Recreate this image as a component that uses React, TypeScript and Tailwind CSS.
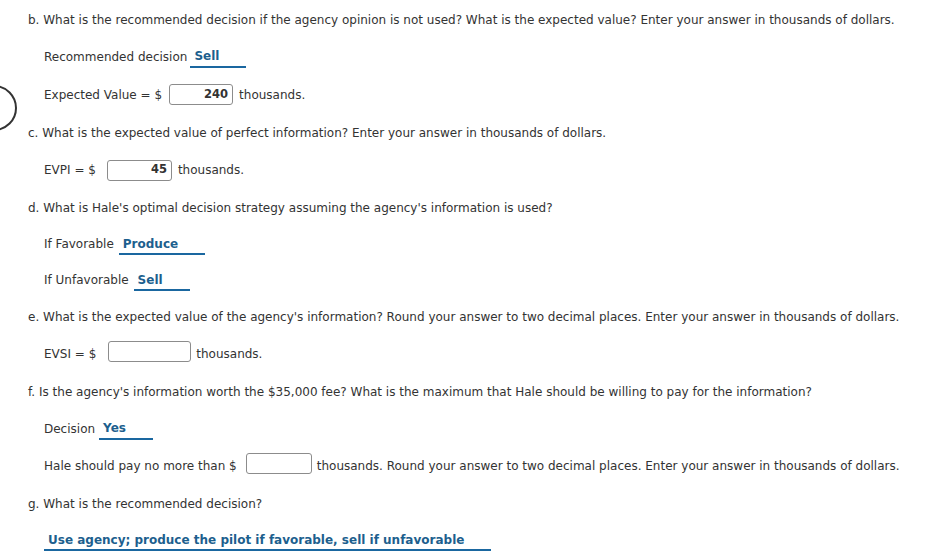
import React from "react";

const Sel = ({ children }: { children: React.ReactNode }) => (
  <span className="inline-flex items-center h-[22px] pt-[1px] pl-[4px] pr-[27px] border-b-2 border-[#1a67a0] text-[#1d5f8e] font-bold">
    {children}
  </span>
);

const Box = ({ w, value }: { w: string; value?: string }) => (
  <span
    className={`inline-flex items-center justify-end h-[21px] ${w} border border-[#8c8c8c] rounded-[3px] pr-[4px] text-[11.5px] font-bold text-[#333]`}
  >
    {value}
  </span>
);

export default function App() {
  return (
    <div
      className="relative w-[931px] h-[555px] overflow-hidden bg-white text-[12px] text-[#333] pt-[2px] whitespace-nowrap"
      style={{ fontFamily: '"DejaVu Sans", Verdana, sans-serif' }}
    >
      <div className="absolute left-[-29px] top-[85px] w-[46px] h-[46px] rounded-full border-[2.5px] border-[#333]" />
      <div className="flex flex-col">
        <div className="h-[36px] flex items-center pl-[28px]">
          b. What is the recommended decision if the agency opinion is not used? What is the expected value? Enter your answer in thousands of dollars.
        </div>
        <div className="h-[37px] flex items-center pl-[44px] gap-[3px]">
          <span>Recommended decision</span>
          <Sel>Sell</Sel>
        </div>
        <div className="h-[39px] flex items-center pl-[44px]">
          <span>Expected Value = $</span>
          <span className="ml-[7px]"><Box w="w-[64px]" value="240" /></span>
          <span className="ml-[6px]">thousands.</span>
        </div>
        <div className="h-[37px] flex items-center pl-[28px]">
          c. What is the expected value of perfect information? Enter your answer in thousands of dollars.
        </div>
        <div className="h-[38px] flex items-center pl-[44px]">
          <span>EVPI = $</span>
          <span className="ml-[11px]"><Box w="w-[65px]" value="45" /></span>
          <span className="ml-[6px]">thousands.</span>
        </div>
        <div className="h-[37px] flex items-center pl-[28px]">
          d. What is Hale's optimal decision strategy assuming the agency's information is used?
        </div>
        <div className="h-[36px] flex items-center pl-[44px] gap-[5px]">
          <span>If Favorable</span>
          <Sel>Produce</Sel>
        </div>
        <div className="h-[36px] flex items-center pl-[44px] gap-[5px]">
          <span>If Unfavorable</span>
          <Sel>Sell</Sel>
        </div>
        <div className="h-[37px] flex items-center pl-[28px]">
          e. What is the expected value of the agency's information? Round your answer to two decimal places. Enter your answer in thousands of dollars.
        </div>
        <div className="h-[38px] flex items-center pl-[44px]">
          <span>EVSI = $</span>
          <span className="ml-[12px]"><Box w="w-[83px]" /></span>
          <span className="ml-[5px]">thousands.</span>
        </div>
        <div className="h-[37px] flex items-center pl-[28px]">
          f. Is the agency's information worth the $35,000 fee? What is the maximum that Hale should be willing to pay for the information?
        </div>
        <div className="h-[37px] flex items-center pl-[44px] gap-[4px]">
          <span>Decision</span>
          <Sel>Yes</Sel>
        </div>
        <div className="h-[38px] flex items-center pl-[44px]">
          <span>Hale should pay no more than $</span>
          <span className="ml-[9px]"><Box w="w-[66px]" /></span>
          <span className="ml-[5px]">thousands. Round your answer to two decimal places. Enter your answer in thousands of dollars.</span>
        </div>
        <div className="h-[37px] flex items-center pl-[28px]">
          g. What is the recommended decision?
        </div>
        <div className="h-[36px] flex items-center pl-[44px]">
          <Sel>Use agency; produce the pilot if favorable, sell if unfavorable</Sel>
        </div>
      </div>
    </div>
  );
}
